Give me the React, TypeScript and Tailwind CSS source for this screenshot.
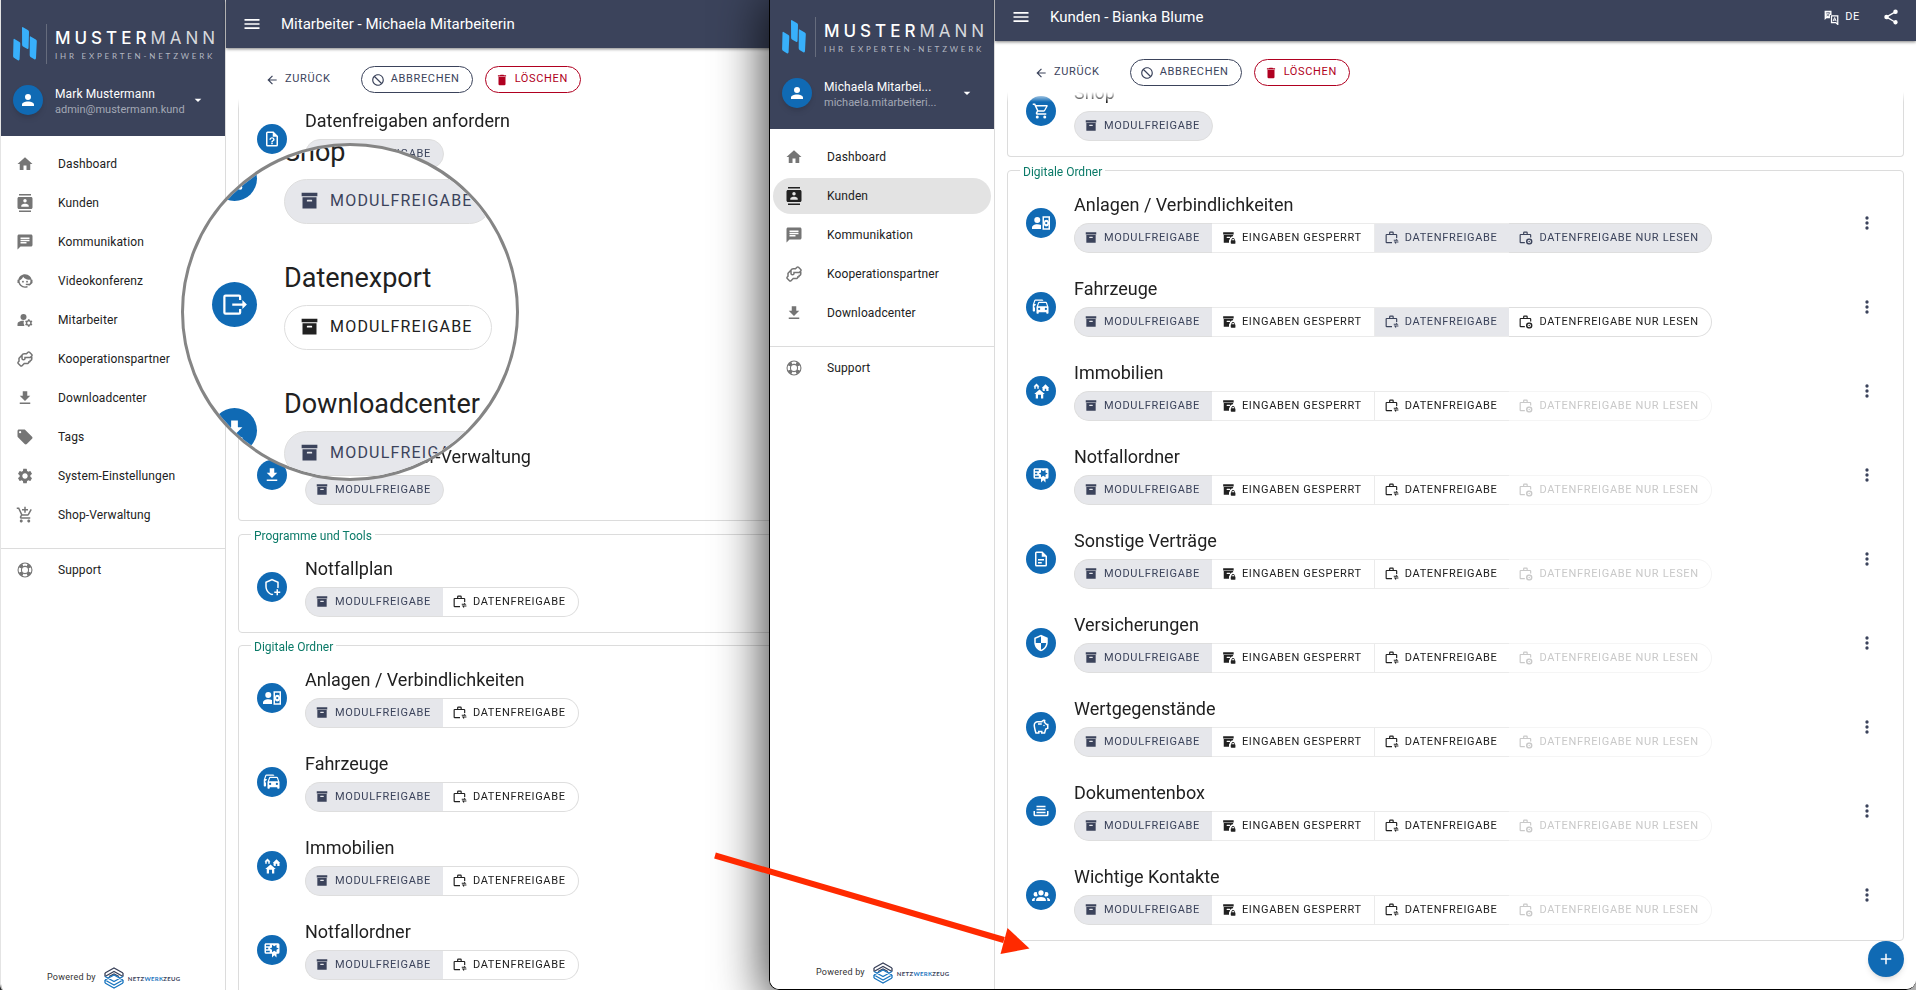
import type { ReactNode } from "react";
import clsx from "clsx";
import {
    MdAddShoppingCart,
    MdChat,
    MdContacts,
    MdManageAccounts,
    MdOutlineSavings,
    MdSettings,
} from "react-icons/md";

const paths = {
    home: "M10,20V14H14V20H19V12H22L12,3L2,12H5V20H10Z",
    agent: "M18.72,14.76C19.07,13.91 19.26,13 19.26,12C19.26,11.28 19.15,10.59 18.96,9.95C18.31,10.1 17.63,10.18 16.92,10.18C13.86,10.18 11.15,8.67 9.5,6.34C8.61,8.5 6.91,10.26 4.77,11.22C4.73,11.47 4.73,11.74 4.73,12A7.27,7.27 0 0,0 12,19.27C13.05,19.27 14.06,19.04 14.97,18.63C15.54,19.72 15.8,20.26 15.78,20.26C14.14,20.81 12.87,21.08 12,21.08C9.58,21.08 7.27,20.13 5.57,18.42C4.53,17.38 3.76,16.11 3.33,14.73H2V10.18H3.09C3.93,6.04 7.6,2.92 12,2.92C14.4,2.92 16.71,3.87 18.42,5.58C19.69,6.84 20.54,8.45 20.89,10.18H22V14.73H21.94L18.38,18L13.08,17.4V15.73H17.91L18.72,14.76M9.27,11.77A1.14,1.14 0 1,1 9.27,14.04A1.14,1.14 0 1,1 9.27,11.77M14.72,11.77A1.14,1.14 0 1,1 14.72,14.04A1.14,1.14 0 1,1 14.72,11.77Z",
    handshake: "M21.71 8.71C22.96 7.46 22.39 6 21.71 5.29L18.72 2.29C17.45 1.04 16 1.61 15.29 2.29L13.59 4H11C9.1 4 8 5 7.44 6.15L3 10.59V14.59L2.29 15.29C1.04 16.55 1.61 18 2.29 18.71L5.29 21.71C5.83 22.25 6.41 22.45 6.96 22.45C7.67 22.45 8.32 22.1 8.71 21.71L11.41 19H15C16.7 19 17.56 17.94 17.87 16.9C19 16.6 19.62 15.74 19.87 14.9C21.42 14.5 22 13.03 22 12V9H21.41L21.71 8.71M20 12C20 12.45 19.81 13 19 13L18 13L18 14C18 14.45 17.81 15 17 15L16 15L16 16C16 16.45 15.81 17 15 17H10.59L7.31 20.28C7 20.57 6.82 20.4 6.71 20.29L3.72 17.31C3.43 17 3.6 16.82 3.71 16.71L5 15.41V11.41L7 9.41V11C7 12.21 7.8 14 10 14S13 12.21 13 11H20V12M20.29 7.29L18.59 9H11V11C11 11.45 10.81 12 10 12S9 11.45 9 11V8C9 7.54 9.17 6 11 6H14.41L16.69 3.72C17 3.43 17.18 3.6 17.29 3.71L20.28 6.69C20.57 7 20.4 7.18 20.29 7.29Z",
    download: "M5,20H19V18H5M19,9H15V3H9V9H5L12,16L19,9Z",
    tag: "M5.5,7A1.5,1.5 0 0,1 4,5.5A1.5,1.5 0 0,1 5.5,4A1.5,1.5 0 0,1 7,5.5A1.5,1.5 0 0,1 5.5,7M21.41,11.58L12.41,2.58C12.05,2.22 11.55,2 11,2H4C2.89,2 2,2.89 2,4V11C2,11.55 2.22,12.05 2.59,12.41L11.58,21.41C11.95,21.77 12.45,22 13,22C13.55,22 14.05,21.77 14.41,21.41L21.41,14.41C21.78,14.05 22,13.55 22,13C22,12.44 21.77,11.94 21.41,11.58Z",
    lifebuoy: "M19.79,15.41C20.74,13.24 20.74,10.75 19.79,8.59L17.05,9.83C17.65,11.21 17.65,12.78 17.06,14.17L19.79,15.41M15.42,4.21C13.25,3.26 10.76,3.26 8.59,4.21L9.83,6.94C11.22,6.35 12.79,6.35 14.18,6.95L15.42,4.21M4.21,8.58C3.26,10.76 3.26,13.24 4.21,15.42L6.95,14.17C6.35,12.79 6.35,11.21 6.95,9.82L4.21,8.58M8.59,19.79C10.76,20.74 13.25,20.74 15.42,19.78L14.18,17.05C12.8,17.65 11.22,17.65 9.84,17.06L8.59,19.79M12,2A10,10 0 0,1 22,12A10,10 0 0,1 12,22A10,10 0 0,1 2,12A10,10 0 0,1 12,2M12,8A4,4 0 0,0 8,12A4,4 0 0,0 12,16A4,4 0 0,0 16,12A4,4 0 0,0 12,8Z",
    archive: "M3,2H21V6H3V2M4,7H20V20H4V7M9.5,10A0.5,0.5 0 0,0 9,10.5V12H15V10.5A0.5,0.5 0 0,0 14.5,10H9.5Z",
    archiveLock: "M2,2H20V6H2V2M3,7H19V9.1A5,5 0 0,0 14.2,12H14V10.5A0.5,0.5 0 0,0 13.5,10H8.5A0.5,0.5 0 0,0 8,10.5V12H13.6V14.2A2.8,2.8 0 0,0 12,16.7V20H3V7M21.8,16V14.5C21.8,13.1 20.4,12 19,12S16.2,13.1 16.2,14.5V16C15.6,16 15,16.6 15,17.2V20.7C15,21.4 15.6,22 16.2,22H21.7C22.4,22 23,21.4 23,20.8V17.3C23,16.6 22.4,16 21.8,16M20.5,16H17.5V14.5C17.5,13.7 18.2,13.2 19,13.2S20.5,13.7 20.5,14.5V16Z",
    share: "M9,1H13A2,2 0 0,1 15,3V5H19A2,2 0 0,1 21,7V12H19V7H3V19H12V21H3A2,2 0 0,1 1,19V7A2,2 0 0,1 3,5H7V3A2,2 0 0,1 9,1M9,3V5H13V3H9M19,13L23,16.5H15V15H19V13M15,18H23V19.5H19V22.5L15,18Z",
    shareRead: "M9,1H13A2,2 0 0,1 15,3V5H19A2,2 0 0,1 21,7V11H19V7H3V19H10V21H3A2,2 0 0,1 1,19V7A2,2 0 0,1 3,5H7V3A2,2 0 0,1 9,1M9,3V5H13V3H9M17.5,13A5,5 0 0,0 12,18A5,5 0 0,0 17.5,23A5,5 0 0,0 23,18A5,5 0 0,0 17.5,13M17.5,15A3,3 0 1,1 17.5,21A3,3 0 1,1 17.5,15M17.5,16.8A1.2,1.2 0 1,0 17.5,19.2A1.2,1.2 0 1,0 17.5,16.8Z",
    accountCash: "M7,4A4,4 0 1,1 7,12A4,4 0 1,1 7,4M7,13.5C8.9,13.5 10.700,13.900 12,14.600V20H0V18C0,15.5 3.1,13.5 7,13.5M14,3H24V21H14V3M16,5V19H22V5H16M19,7.500A3,3 0 0,1 22,10.500V13.500A3,3 0 0,1 16,13.500V10.500A3,3 0 0,1 19,7.500M19,10.500A1.5,1.5 0 1,0 19,13.500A1.5,1.5 0 1,0 19,10.500Z",
    cars: "M8,11L9.5,6.5H18.5L20,11M18.5,16A1.5,1.5 0 0,1 17,14.5A1.5,1.5 0 0,1 18.5,13A1.5,1.5 0 0,1 20,14.5A1.5,1.5 0 0,1 18.5,16M9.5,16A1.5,1.5 0 0,1 8,14.5A1.5,1.5 0 0,1 9.5,13A1.5,1.5 0 0,1 11,14.5A1.5,1.5 0 0,1 9.5,16M19.92,6C19.71,5.4 19.14,5 18.5,5H9.5C8.86,5 8.29,5.4 8.08,6L6,12V20A1,1 0 0,0 7,21H8A1,1 0 0,0 9,20V19H19V20A1,1 0 0,0 20,21H21A1,1 0 0,0 22,20V12L19.92,6M14.92,3C14.71,2.4 14.14,2 13.5,2H4.5C3.86,2 3.29,2.4 3.08,3L1,9V17A1,1 0 0,0 2,18H3A1,1 0 0,0 4,17V12.91C3.22,12.63 2.82,11.77 3.1,11C3.32,10.4 3.87,10 4.5,10H4.57L5.27,8H3L4.5,3.5H15.09L14.92,3Z",
    homes: "M17,16H15V22H12V17H8V22H5V16H3L10,10L17,16M6,2L10,6H9V9H7V6H5V9H3V6H2L6,2M18,3L23,8H22V12H19V9H17V12H15.34L14,10.87V8H13L18,3Z",
    certificate: "M4,3C2.89,3 2,3.89 2,5V15A2,2 0 0,0 4,17H12V22L15,19L18,22V17H20A2,2 0 0,0 22,15V5A2,2 0 0,0 20,3H4M12,5L15,7L18,5V8.5L21,10L18,11.5V15L15,13L12,15V11.5L9,10L12,8.5V5M4,5H9V7H4V5M4,9H7V11H4V9M4,13H9V15H4V13Z",
    document: "M6,2A2,2 0 0,0 4,4V20A2,2 0 0,0 6,22H18A2,2 0 0,0 20,20V8L14,2H6M6,4H13V9H18V20H6V4M8,12V14H16V12H8M8,16V18H13V16H8Z",
    question: "M6,2A2,2 0 0,0 4,4V20A2,2 0 0,0 6,22H18A2,2 0 0,0 20,20V8L14,2H6M6,4H13V9H18V20H6V4M11,17H13V19H11V17M8.5,13C8.5,11.1 10,9.7 12,9.7S15.5,11.1 15.5,12.9C15.5,14.6 13,14.8 13,16.2H11C11,13.6 13.6,14 13.6,12.8C13.6,12 12.9,11.4 12,11.4S10.4,12.1 10.4,13H8.5Z",
    shieldHalf: "M12,12H19C18.47,16.11 15.72,19.78 12,20.92V12H5V6.3L12,3.19M12,1L3,5V11C3,16.55 6.84,21.73 12,23C17.16,21.73 21,16.55 21,11V5L12,1Z",
    shieldPlus: "M12,1L21,5V11C21,11.9 20.9,12.7 20.7,13.5A6,6 0 0,0 18.8,13C18.9,12.4 19,11.8 19,11.2V6.3L12,3.2L5,6.3V11.2C5,15.5 8,19.7 12,21C12.3,20.9 12.6,20.8 12.9,20.6C13.1,21.3 13.4,21.9 13.8,22.4C13.2,22.7 12.6,22.9 12,23C6.8,21.7 3,16.6 3,11V5L12,1M18,15H20V18H23V20H20V23H18V20H15V18H18V15Z",
    tray: "M18 5H6V7H18M6 9H18V11H6M2 12H4V17H20V12H22V17A2 2 0 0 1 20 19H4A2 2 0 0 1 2 17M18 13H6V15H18Z",
    group: "M12,5.5A3.5,3.5 0 0,1 15.5,9A3.5,3.5 0 0,1 12,12.5A3.5,3.5 0 0,1 8.5,9A3.5,3.5 0 0,1 12,5.5M5,8C5.56,8 6.08,8.15 6.53,8.42C6.38,9.85 6.8,11.27 7.66,12.38C7.16,13.34 6.16,14 5,14A3,3 0 0,1 2,11A3,3 0 0,1 5,8M19,8A3,3 0 0,1 22,11A3,3 0 0,1 19,14C17.84,14 16.84,13.34 16.34,12.38C17.2,11.27 17.62,9.85 17.47,8.42C17.92,8.15 18.44,8 19,8M5.5,18.25C5.5,16.18 8.41,14.5 12,14.5C15.59,14.5 18.5,16.18 18.5,18.25V20H5.5V18.25M0,20V18.5C0,17.11 1.89,15.94 4.45,15.6C3.86,16.28 3.5,17.22 3.5,18.25V20H0M24,20H20.5V18.25C20.5,17.22 20.14,16.28 19.55,15.6C22.11,15.94 24,17.11 24,18.5V20Z",
    cart: "M17,18A2,2 0 1,1 17,22A2,2 0 1,1 17,18M7,18A2,2 0 1,1 7,22A2,2 0 1,1 7,18M1,2H4.27L5.21,4H20A1,1 0 0,1 21,5C21,5.17 20.95,5.34 20.88,5.5L17.3,11.97C16.96,12.58 16.3,13 15.55,13H8.1L7.2,14.63L7.17,14.75A0.25,0.25 0 0,0 7.42,15H19V17H7C5.89,17 5,16.1 5,15C5,14.65 5.09,14.32 5.24,14.04L6.6,11.59L3,4H1V2M16,11L18.78,6H6.14L8.5,11H16Z",
    exit: "M4,3H16A2,2 0 0,1 18,5V8H16V5H4V19H16V16H18V19A2,2 0 0,1 16,21H4A2,2 0 0,1 2,19V5A2,2 0 0,1 4,3M19,8L23,12L19,16V13H10V11H19V8Z",
    account: "M12,4A4,4 0 0,1 16,8A4,4 0 0,1 12,12A4,4 0 0,1 8,8A4,4 0 0,1 12,4M12,14C16.42,14 20,15.79 20,18V20H4V18C4,15.79 7.58,14 12,14Z",
    caret: "M7,10L12,15L17,10H7Z",
    menu: "M3,6H21V8H3V6M3,11H21V13H3V11M3,16H21V18H3V16Z",
    back: "M20,11V13H8L13.5,18.5L12.08,19.92L4.16,12L12.08,4.08L13.5,5.5L8,11H20Z",
    cancel: "M12 2C17.5 2 22 6.5 22 12S17.5 22 12 22 2 17.5 2 12 6.5 2 12 2M12 4C10.1 4 8.4 4.6 7.1 5.7L18.3 16.9C19.3 15.5 20 13.8 20 12C20 7.6 16.4 4 12 4M16.9 18.3L5.7 7.1C4.6 8.4 4 10.1 4 12C4 16.4 7.6 20 12 20C13.9 20 15.6 19.4 16.9 18.3Z",
    trash: "M19,4H15.5L14.5,3H9.5L8.5,4H5V6H19M6,19A2,2 0 0,0 8,21H16A2,2 0 0,0 18,19V7H6V19Z",
    variant: "M18,16.08C17.24,16.08 16.56,16.38 16.04,16.85L8.91,12.7C8.96,12.47 9,12.24 9,12C9,11.76 8.96,11.53 8.91,11.3L15.96,7.19C16.5,7.69 17.21,8 18,8A3,3 0 0,0 21,5A3,3 0 0,0 18,2A3,3 0 0,0 15,5C15,5.24 15.04,5.47 15.09,5.7L8.04,9.81C7.5,9.31 6.79,9 6,9A3,3 0 0,0 3,12A3,3 0 0,0 6,15C6.79,15 7.5,14.69 8.04,14.19L15.16,18.34C15.11,18.55 15.08,18.77 15.08,19C15.08,20.61 16.39,21.91 18,21.91C19.61,21.91 20.92,20.61 20.92,19A2.92,2.92 0 0,0 18,16.08Z",
    dots: "M12,16A2,2 0 1,1 12,20A2,2 0 1,1 12,16M12,10A2,2 0 1,1 12,14A2,2 0 1,1 12,10M12,4A2,2 0 1,1 12,8A2,2 0 1,1 12,4Z",
    plus: "M19,13H13V19H11V13H5V11H11V5H13V11H19V13Z",
};

type IconName = keyof typeof paths;

function Icon({ name, className }: { name: IconName; className?: string }) {
    return (
        <svg viewBox="0 0 24 24" fill="currentColor" fillRule="evenodd" aria-hidden="true" className={clsx("shrink-0", className)}>
            <path d={paths[name]} />
        </svg>
    );
}

// two overlapping language tiles
function TranslateIcon() {
    return (
        <svg viewBox="0 0 24 24" className="size-[15px]" fill="none" aria-hidden="true">
            <path d="M1 1H12V8H9.500V13H4L1 16Z" fill="#fff" />
            <path d="M3 4.500H10M6.500 3V4.500M4 9.500C7 8.500 8.500 7 8.500 4.500M4.500 6C5.500 8 6.500 8.800 8 9.500" stroke="#3b435b" />
            <path d="M12 9.500H22V23L19 20H12Z" stroke="#fff" strokeWidth="2" />
            <path d="M14.500 18 17 12 19.500 18M15.500 16H18.500" stroke="#fff" strokeWidth="1.500" />
        </svg>
    );
}

const nav: Record<string, ReactNode> = {
    Dashboard: <Icon name="home" className="size-[18px]" />,
    Kunden: <MdContacts className="size-[18px]" />,
    Kommunikation: <MdChat className="size-[18px]" />,
    Videokonferenz: <Icon name="agent" className="size-[18px]" />,
    Mitarbeiter: <MdManageAccounts className="size-[18px]" />,
    Kooperationspartner: <Icon name="handshake" className="size-[18px]" />,
    Downloadcenter: <Icon name="download" className="size-[18px]" />,
    Tags: <Icon name="tag" className="size-[18px]" />,
    "System-Einstellungen": <MdSettings className="size-[18px]" />,
    "Shop-Verwaltung": <MdAddShoppingCart className="size-[18px]" />,
    Support: <Icon name="lifebuoy" className="size-[18px]" />,
};

function NavItem({ label, active }: { label: string; active?: boolean }) {
    return (
        <a
            href="#"
            className={clsx(
                "mx-[3px] flex h-9 items-center gap-6 rounded-full pl-3 text-[12px] tracking-[0.01em]",
                active ? "bg-[#e3e3e3]" : "bg-white"
            )}
        >
            <span className={active ? "text-[#212121]" : "text-[#757575]"}>{nav[label]}</span>
            {label}
        </a>
    );
}

function Brand() {
    return (
        <div className="flex h-10 items-center">
            <svg viewBox="0 0 24 34" className="h-[34px] w-6" aria-hidden="true">
                <g fill="#38b0fb">
                    <path d="M1.500 12 6.500 15Q7.400 15.600 7.300 17L6.600 32Q6.400 34 4.800 33.200L.9 30.800Q.1 30.300.1 29L.5 12.800Q.6 11.500 1.500 12Z" />
                    <path d="M10 .2 15.200 3.200Q16 3.700 16 5L15.600 20.500Q15.500 22.600 14 21.800L10 19.500Q9.100 19 9.100 17.800L9 1Q9 -.3 10 .2Z" />
                    <path d="M17.600 9.400 22.800 12.400Q23.900 13 23.800 14.400L23 31Q22.800 33 21.300 32.200L17.500 29.900Q16.600 29.300 16.700 28L16.800 10.200Q16.800 8.900 17.600 9.400Z" />
                </g>
            </svg>
            <div className="ml-[9px] h-10 w-px bg-[#666c7d]" />
            <div className="ml-2 whitespace-nowrap pt-[2px]">
                <div className="font-[Inter,sans-serif] text-[17px] leading-[22px] tracking-[4px] text-[#d6d8dc]">
                    <span className="font-medium text-white">MUSTER</span>MANN
                </div>
                <div className="font-[Lato,sans-serif] text-[8px] leading-[14px] tracking-[0.35em] text-[#b4b8c2]">
                    IHR EXPERTEN-NETZWERK
                </div>
            </div>
        </div>
    );
}

function PoweredBy() {
    return (
        <div className="flex h-8 items-center pl-[46px] text-[9px] tracking-wide text-[#333]">
            Powered by
            <svg viewBox="0 0 20 22" className="ml-2 h-[22px] w-5" fill="none" strokeWidth="1.300" aria-hidden="true">
                <g stroke="#3b435b">
                    <path d="M1 6 10 1l9 5M1 9.500 10 4.500l9 5M5 9.500 10 7l5 2.500" />
                    <path d="M1 6v3.500M19 6v3.500" />
                </g>
                <g stroke="#1a76c0">
                    <path d="M1 13 10 8l9 5M1 9.500 10 14.500l9-5M1 13l9 5 9-5M1 16l9 5 9-5" />
                    <path d="M1 13v3M19 13v3" />
                </g>
            </svg>
            <span className="ml-1 font-[Lato,sans-serif] text-[6px] font-bold tracking-wider text-[#3b435b]">
                NETZ<span className="text-[#1a76c0]">WERK</span>ZEUG
            </span>
        </div>
    );
}

function Sidebar({ name, email, items, active }: { name: string; email: string; items: string[]; active?: string }) {
    return (
        <aside className="flex w-[225px] shrink-0 flex-col border-r border-[#dcdcdc] bg-white">
            <div className="flex h-[136px] shrink-0 flex-col bg-[#3b435b] pl-3 pt-6 text-white">
                <Brand />
                <button type="button" className="mt-[21px] flex h-[30px] items-center text-left">
                    <span className="flex size-[30px] shrink-0 items-center justify-center rounded-full bg-[#106ab4] shadow-md">
                        <Icon name="account" className="size-[18px]" />
                    </span>
                    <span className="ml-3 w-[135px] whitespace-nowrap pt-[3px] leading-[15px]">
                        <span className="block text-[12px] tracking-[0.01em]">{name}</span>
                        <span className="block text-[11px] text-[#a3a8b5]">{email}</span>
                    </span>
                    <Icon name="caret" className="size-4" />
                </button>
            </div>
            <nav className="flex flex-1 flex-col gap-[3px] pt-[10px] text-[#212121]">
                {items.map((label) => (
                    <NavItem key={label} label={label} active={label === active} />
                ))}
                <hr className="mt-3 border-[#dcdcdc]" />
                <NavItem label="Support" />
            </nav>
            <PoweredBy />
        </aside>
    );
}

type Tone = "on" | "off" | "disabled";
type SegmentKind = "modul" | "gesperrt" | "daten" | "lesen";

const segments: Record<SegmentKind, { label: string; icon: IconName }> = {
    modul: { label: "MODULFREIGABE", icon: "archive" },
    gesperrt: { label: "EINGABEN GESPERRT", icon: "archiveLock" },
    daten: { label: "DATENFREIGABE", icon: "share" },
    lesen: { label: "DATENFREIGABE NUR LESEN", icon: "shareRead" },
};

type Entry = { title: string; icon: ReactNode; states: [SegmentKind, Tone][] };

function Row({ entry, large, menu }: { entry: Entry; large?: boolean; menu?: boolean }) {
    return (
        <div className={clsx("flex items-center", large ? "gap-[27px]" : "gap-[18px]")}>
            <span
                className={clsx(
                    "flex shrink-0 items-center justify-center rounded-full bg-[#106ab4] text-white",
                    large ? "size-[45px] [&>svg]:size-[27px]" : "size-[30px] [&>svg]:size-[18px]"
                )}
            >
                {entry.icon}
            </span>
            <div className={clsx("flex flex-col", large ? "gap-[9px]" : "gap-[6px]")}>
                <h2 className={clsx("whitespace-nowrap text-[#212121]", large ? "text-[27px] leading-9" : "text-[18px] leading-6")}>
                    {entry.title}
                </h2>
                <div className="flex">
                    {entry.states.map(([kind, tone], i) => {
                        const first = i === 0;
                        const last = i === entry.states.length - 1;
                        return (
                            <button
                                key={kind}
                                type="button"
                                disabled={tone === "disabled"}
                                className={clsx(
                                    "flex items-center whitespace-nowrap border-y",
                                    large
                                        ? "h-[45px] gap-[10px] pl-[14px] pr-[18px] text-[16px] tracking-[0.075em]"
                                        : "h-[30px] gap-[6px] pr-3 text-[11px] tracking-[0.06em]",
                                    !large && (first ? "pl-[9px]" : "pl-[10px]"),
                                    first && "rounded-l-full border-l",
                                    last && "rounded-r-full border-r",
                                    kind === "daten" && !last && "border-l",
                                    tone === "on" && "bg-[#e6e7eb] text-[#3b435b]",
                                    tone === "off" && "bg-white text-[#212121]",
                                    tone === "disabled" && "bg-white text-[#c9c9c9]",
                                    tone === "disabled" ? "border-[#f5f5f5]" : first || last ? "border-[#dedede]" : "border-[#ebebeb]"
                                )}
                            >
                                <Icon name={segments[kind].icon} className={large ? "size-[21px]" : "size-[14px]"} />
                                {segments[kind].label}
                            </button>
                        );
                    })}
                </div>
            </div>
            {menu && (
                <button type="button" aria-label="Mehr" className="ml-auto mr-2 text-[#3b435b]">
                    <Icon name="dots" className="size-5" />
                </button>
            )}
        </div>
    );
}

const modul: [SegmentKind, Tone][] = [["modul", "on"]];
const two: [SegmentKind, Tone][] = [["modul", "on"], ["daten", "off"]];
const four = (daten: Tone, lesen: Tone): [SegmentKind, Tone][] => [
    ["modul", "on"],
    ["gesperrt", "off"],
    ["daten", daten],
    ["lesen", lesen],
];

const shop: Entry = { title: "Shop", icon: <Icon name="cart" />, states: modul };
const dataExport: Entry = { title: "Datenexport", icon: <Icon name="exit" />, states: [["modul", "off"]] };
const downloads: Entry = { title: "Downloadcenter", icon: <Icon name="download" />, states: modul };
const requests: Entry = { title: "Datenfreigaben anfordern", icon: <Icon name="question" />, states: modul };
const downloadAdmin: Entry = { title: "Downloadcenter-Verwaltung", icon: <Icon name="download" />, states: modul };
const emergency: Entry = { title: "Notfallplan", icon: <Icon name="shieldPlus" />, states: two };

const folders: [string, ReactNode][] = [
    ["Anlagen / Verbindlichkeiten", <Icon name="accountCash" />],
    ["Fahrzeuge", <Icon name="cars" />],
    ["Immobilien", <Icon name="homes" />],
    ["Notfallordner", <Icon name="certificate" />],
    ["Sonstige Verträge", <Icon name="document" />],
    ["Versicherungen", <Icon name="shieldHalf" />],
    ["Wertgegenstände", <MdOutlineSavings />],
    ["Dokumentenbox", <Icon name="tray" />],
    ["Wichtige Kontakte", <Icon name="group" />],
];

const staffFolders: Entry[] = folders.slice(0, 4).map(([title, icon]) => ({ title, icon, states: two }));

const customerFolders: Entry[] = folders.map(([title, icon], i) => ({
    title,
    icon,
    states: i === 0 ? four("on", "on") : i === 1 ? four("on", "off") : four("off", "disabled"),
}));

function Section({ legend, entries, menu }: { legend: string; entries: Entry[]; menu?: boolean }) {
    return (
        <fieldset className="mt-[2px] min-w-0 rounded-[4px] border border-[#dcdcdc] px-[18px] pb-[15px]">
            <legend className="-ml-[6px] px-[3px] pt-1 text-[12px] leading-4 text-[#0b7a68]">{legend}</legend>
            <div className="flex flex-col gap-6 pt-[13px]">
                {entries.map((entry) => (
                    <Row key={entry.title} entry={entry} menu={menu} />
                ))}
            </div>
        </fieldset>
    );
}

// upper section, scrolled so far that its legend is out of view
function ScrolledSection({ className, children }: { className: string; children: ReactNode }) {
    return (
        <div
            className={clsx(
                "mb-[3px] flex flex-col rounded-b-[4px] border-x border-b border-[#dcdcdc] px-[18px] pb-[15px]",
                className
            )}
        >
            {children}
        </div>
    );
}

const actionButton = "flex h-[27px] items-center gap-[6px] rounded-full text-[11px] tracking-[0.06em]";

function Main({ title, tools, children }: { title: string; tools?: ReactNode; children: ReactNode }) {
    return (
        <main className="flex min-w-0 flex-1 flex-col bg-white">
            <header className="flex h-12 shrink-0 items-center bg-[#3b435b] pl-4 pr-4 text-white shadow-[0_1px_3px_rgba(0,0,0,0.5)]">
                <button type="button" aria-label="Menü">
                    <Icon name="menu" className="size-5" />
                </button>
                <h1 className="ml-[19px] text-[15px]">{title}</h1>
                {tools}
            </header>
            <div className="flex h-[51px] shrink-0 items-center pl-[39px] pt-[18px] pb-[6px] text-[#3b435b]">
                <button type="button" className={clsx(actionButton, "mr-[30px]")}>
                    <Icon name="back" className="size-[14px]" />
                    ZURÜCK
                </button>
                <button type="button" className={clsx(actionButton, "mr-3 border border-[#3b435b] pl-[9px] pr-3")}>
                    <Icon name="cancel" className="size-[14px]" />
                    ABBRECHEN
                </button>
                <button type="button" className={clsx(actionButton, "border border-[#b00020] pl-[9px] pr-3 text-[#b00020]")}>
                    <Icon name="trash" className="size-[14px]" />
                    LÖSCHEN
                </button>
            </div>
            <div className="min-h-0 flex-1 overflow-hidden px-3 [mask-image:linear-gradient(to_bottom,transparent,black_10px)]">
                {children}
            </div>
        </main>
    );
}

function Magnifier() {
    return (
        <div className="absolute left-[181px] top-[143px] flex size-[338px] flex-col justify-center gap-9 overflow-hidden rounded-full border-3 border-[#858585] bg-white pb-[15px] pl-7">
            <Row entry={shop} large />
            <Row entry={dataExport} large />
            <Row entry={downloads} large />
        </div>
    );
}

function Arrow() {
    return (
        <svg viewBox="0 0 330 120" className="pointer-events-none absolute left-[708px] top-[840px] h-[120px] w-[330px]" aria-hidden="true">
            <path d="M7 15.500 296 100" stroke="#ff2a00" strokeWidth="6" />
            <path d="M299.500 88 321.500 108.500 292.500 114Z" fill="#ff2a00" />
        </svg>
    );
}

export default function App() {
    return (
        <div className="relative h-screen overflow-hidden bg-[#2a2a2a] font-[Roboto,sans-serif] text-[#212121]">
            <div className="absolute inset-x-0 -bottom-1 top-0 flex overflow-hidden rounded-bl-[10px] border-l border-[#e4e4e4]">
                <Sidebar
                    name="Mark Mustermann"
                    email="admin@mustermann.kund"
                    items={Object.keys(nav).filter((label) => label !== "Support")}
                />
                <Main title="Mitarbeiter - Michaela Mitarbeiterin">
                    <ScrolledSection className="gap-[276px] pt-[10px]">
                        <Row entry={requests} />
                        <Row entry={downloadAdmin} />
                    </ScrolledSection>
                    <Section legend="Programme und Tools" entries={[emergency]} />
                    <Section legend="Digitale Ordner" entries={staffFolders} />
                </Main>
            </div>

            <Magnifier />

            <div className="absolute -top-[7px] bottom-0 left-[769px] right-0 flex overflow-hidden rounded-b-[10px] border-b border-l border-black shadow-[0_10px_50px_4px_rgba(0,0,0,0.75)]">
                <Sidebar
                    name="Michaela Mitarbei..."
                    email="michaela.mitarbeiteri..."
                    items={["Dashboard", "Kunden", "Kommunikation", "Kooperationspartner", "Downloadcenter"]}
                    active="Kunden"
                />
                <Main
                    title="Kunden - Bianka Blume"
                    tools={
                        <>
                            <button type="button" className="ml-auto flex items-center gap-[6px] text-[11px] tracking-[0.06em]">
                                <TranslateIcon />
                                DE
                            </button>
                            <button type="button" aria-label="Teilen" className="ml-[22px]">
                                <Icon name="variant" className="size-[18px]" />
                            </button>
                        </>
                    }
                >
                    <ScrolledSection className="-mt-[18px] pt-[7px]">
                        <Row entry={shop} />
                    </ScrolledSection>
                    <Section legend="Digitale Ordner" entries={customerFolders} menu />
                </Main>
                <button
                    type="button"
                    aria-label="Hinzufügen"
                    className="absolute bottom-3 right-3 flex size-9 items-center justify-center rounded-full bg-[#106ab4] text-white shadow-md"
                >
                    <Icon name="plus" className="size-[18px]" />
                </button>
            </div>

            <Arrow />
        </div>
    );
}
